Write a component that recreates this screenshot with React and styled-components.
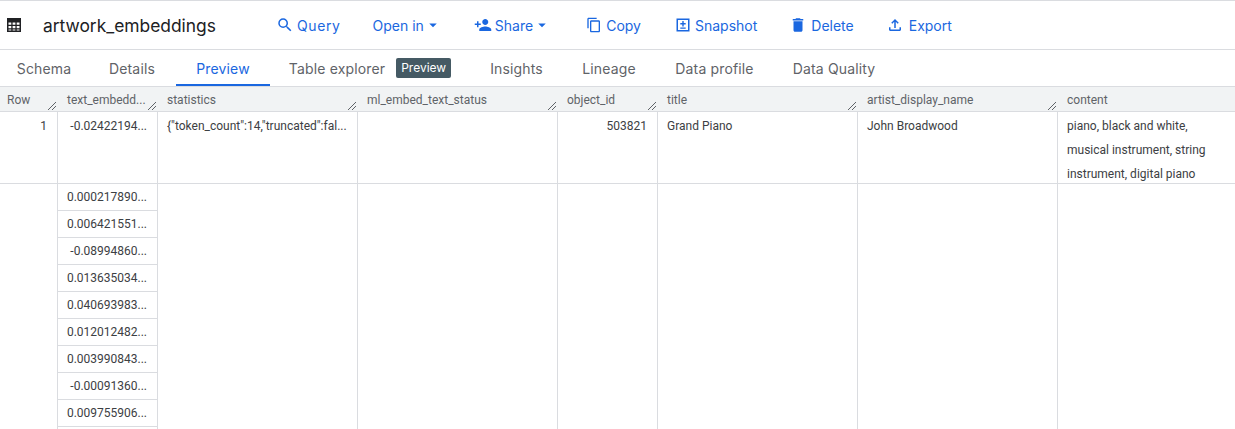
import React from "react";
import styled, { createGlobalStyle } from "styled-components";
import { MdSearch, MdPersonAdd, MdDelete, MdArrowDropDown, MdContentCopy, MdOutlineFileUpload } from "react-icons/md";

const GlobalStyle = createGlobalStyle`
  html, body {
    margin: 0;
    padding: 0;
    background: #fff;
    overflow: hidden;
  }
  body {
    font-family: Roboto, "Liberation Sans", sans-serif;
  }
`;

const Page = styled.div`
  width: 1235px;
  height: 429px;
  overflow: hidden;
  border-top: 1px solid #dadce0;
  box-sizing: border-box;
`;

const Toolbar = styled.div`
  display: flex;
  align-items: center;
  height: 48px;
  border-bottom: 1px solid #dadce0;
`;

const Title = styled.div`
  display: flex;
  align-items: center;
  width: 276px;
  padding-left: 6px;
  box-sizing: border-box;
  gap: 21px;
  font-family: Inter, sans-serif;
  font-size: 17.4px;
  color: #202124;
`;

const Action = styled.button`
  display: flex;
  align-items: center;
  gap: ${(p) => p.$gap}px;
  margin-right: ${(p) => p.$space}px;
  padding: 0;
  border: 0;
  background: none;
  color: #1a67e0;
  font-family: Inter, sans-serif;
  font-size: 14px;
  letter-spacing: ${(p) => p.$track || 0}px;
`;

const Caret = styled(MdArrowDropDown)`
  margin-left: ${(p) => p.$pull || 0}px;
`;

const Tabs = styled.div`
  display: flex;
  height: 36px;
  border-bottom: 1px solid #dadce0;
`;

const Tab = styled.div`
  display: flex;
  align-items: center;
  justify-content: center;
  gap: 11px;
  width: ${(p) => p.$width}px;
  box-sizing: border-box;
  font-family: Inter, sans-serif;
  font-size: 14px;
  letter-spacing: 0.15px;
  color: ${(p) => (p.$active ? "#1a67e0" : "#5f6368")};
  border-bottom: 2px solid ${(p) => (p.$active ? "#1a67e0" : "transparent")};
  padding-top: 2px;
`;

const Badge = styled.span`
  background: #455a64;
  color: #fff;
  font-size: 12px;
  letter-spacing: 0;
  line-height: 20px;
  padding: 0 5px;
  border-radius: 2px;
`;

const Grid = styled.div`
  display: grid;
  grid-template-columns: 58px 100px 200px 200px 100px 200px 200px 177px;
  grid-template-rows: 25px 72px 1fr;
  height: 330px;
  font-size: 12px;
  color: #3c4043;
`;

const Head = styled.div`
  position: relative;
  display: flex;
  align-items: center;
  padding-left: ${(p) => (p.$first ? 7 : 9)}px;
  padding-top: 1px;
  box-sizing: border-box;
  background: #f1f3f4;
  border-bottom: 1px solid #dadce0;
  color: #5f6368;
`;

const Grip = styled.svg`
  position: absolute;
  right: 1px;
  bottom: 0;
  width: 10px;
  height: 10px;
`;

const Cell = styled.div`
  padding: 6px 10px 0 9px;
  border-right: ${(p) => (p.$last ? "0" : "1px solid #dadce0")};
  border-bottom: ${(p) => (p.$open ? "0" : "1px solid #dadce0")};
  text-align: ${(p) => (p.$right ? "right" : "left")};
  line-height: 16px;
  white-space: nowrap;
`;

const ContentCell = styled(Cell)`
  padding-top: 2px;
  line-height: 24px;
  white-space: pre-line;
`;

const SubList = styled.div`
  display: flex;
  flex-direction: column;
  border-right: 1px solid #dadce0;
`;

const SubCell = styled.div`
  height: 27px;
  flex: none;
  box-sizing: border-box;
  padding-right: 10px;
  border-bottom: 1px solid #dadce0;
  text-align: right;
  line-height: 26px;
`;

const TableIcon = () => (
  <svg width="16" height="16" viewBox="0 0 16 16">
    <path
      fill="#202124"
      fillRule="evenodd"
      d="M1 1h14v14H1zM2.5 5.5v2.2h2.8V5.5zM6.6 5.5v2.2h2.8V5.5zM10.7 5.5v2.2h2.8V5.5zM2.5 9v2.2h2.8V9zM6.6 9v2.2h2.8V9zM10.7 9v2.2h2.8V9zM2.5 12.4v1.2h2.8v-1.2zM6.6 12.4v1.2h2.8v-1.2zM10.7 12.4v1.2h2.8v-1.2z"
    />
  </svg>
);

const SnapshotIcon = () => (
  <svg width="18" height="18" viewBox="0 0 18 18">
    <path
      fill="currentColor"
      fillRule="evenodd"
      d="M2.5 2.5h13v13h-13zM4 4v10h10V4zM8.3 5h1.4v2h2v1.4h-2v2H8.3v-2h-2V7h2zM6.3 11.4h5.4v1.3H6.3z"
    />
  </svg>
);

const columns = [
  "Row",
  "text_embedd...",
  "statistics",
  "ml_embed_text_status",
  "object_id",
  "title",
  "artist_display_name",
  "content",
];

const values = [
  "0.000217890...",
  "0.006421551...",
  "-0.08994860...",
  "0.013635034...",
  "0.040693983...",
  "0.012012482...",
  "0.003990843...",
  "-0.00091360...",
  "0.009755906...",
  "",
];

export default function App() {
  return (
    <Page>
      <GlobalStyle />
      <Toolbar>
        <Title>
          <TableIcon />
          artwork_embeddings
        </Title>
        <Action $space={32} $gap={3} $track={0.6}>
          <MdSearch size={18} />
          Query
        </Action>
        <Action $space={32} $gap={0}>
          Open in
          <Caret size={18} />
        </Action>
        <Action $space={35} $gap={3}>
          <MdPersonAdd size={18} />
          <span>Share</span>
          <Caret size={18} $pull={-3} />
        </Action>
        <Action $space={33} $gap={4}>
          <MdContentCopy size={16} />
          Copy
        </Action>
        <Action $space={32} $gap={3}>
          <SnapshotIcon />
          Snapshot
        </Action>
        <Action $space={32} $gap={4}>
          <MdDelete size={18} />
          Delete
        </Action>
        <Action $space={0} $gap={5}>
          <MdOutlineFileUpload size={18} />
          Export
        </Action>
      </Toolbar>
      <Tabs>
        <Tab $width={88}>Schema</Tab>
        <Tab $width={88}>Details</Tab>
        <Tab $width={94} $active>
          Preview
        </Tab>
        <Tab $width={200}>
          Table explorer <Badge>Preview</Badge>
        </Tab>
        <Tab $width={93}>Insights</Tab>
        <Tab $width={92}>Lineage</Tab>
        <Tab $width={119}>Data profile</Tab>
        <Tab $width={120}>Data Quality</Tab>
      </Tabs>
      <Grid>
        {columns.map((name, i) => (
          <Head key={name} $first={i === 0}>
            {name}
            {i < columns.length - 1 && (
              <Grip viewBox="0 0 10 10" stroke="#5f6368" strokeWidth="1">
                <path d="M1 9 9 1M5 9l4-4" />
              </Grip>
            )}
          </Head>
        ))}
        <Cell $right>1</Cell>
        <Cell $right>-0.02422194...</Cell>
        <Cell>{'{"token_count":14,"truncated":fal...'}</Cell>
        <Cell />
        <Cell $right>503821</Cell>
        <Cell>Grand Piano</Cell>
        <Cell>John Broadwood</Cell>
        <ContentCell $last>{"piano, black and white,\nmusical instrument, string\ninstrument, digital piano"}</ContentCell>
        <Cell $open />
        <SubList>
          {values.map((v, i) => (
            <SubCell key={i}>{v}</SubCell>
          ))}
        </SubList>
        <Cell $open />
        <Cell $open />
        <Cell $open />
        <Cell $open />
        <Cell $open />
        <Cell $open $last />
      </Grid>
    </Page>
  );
}
